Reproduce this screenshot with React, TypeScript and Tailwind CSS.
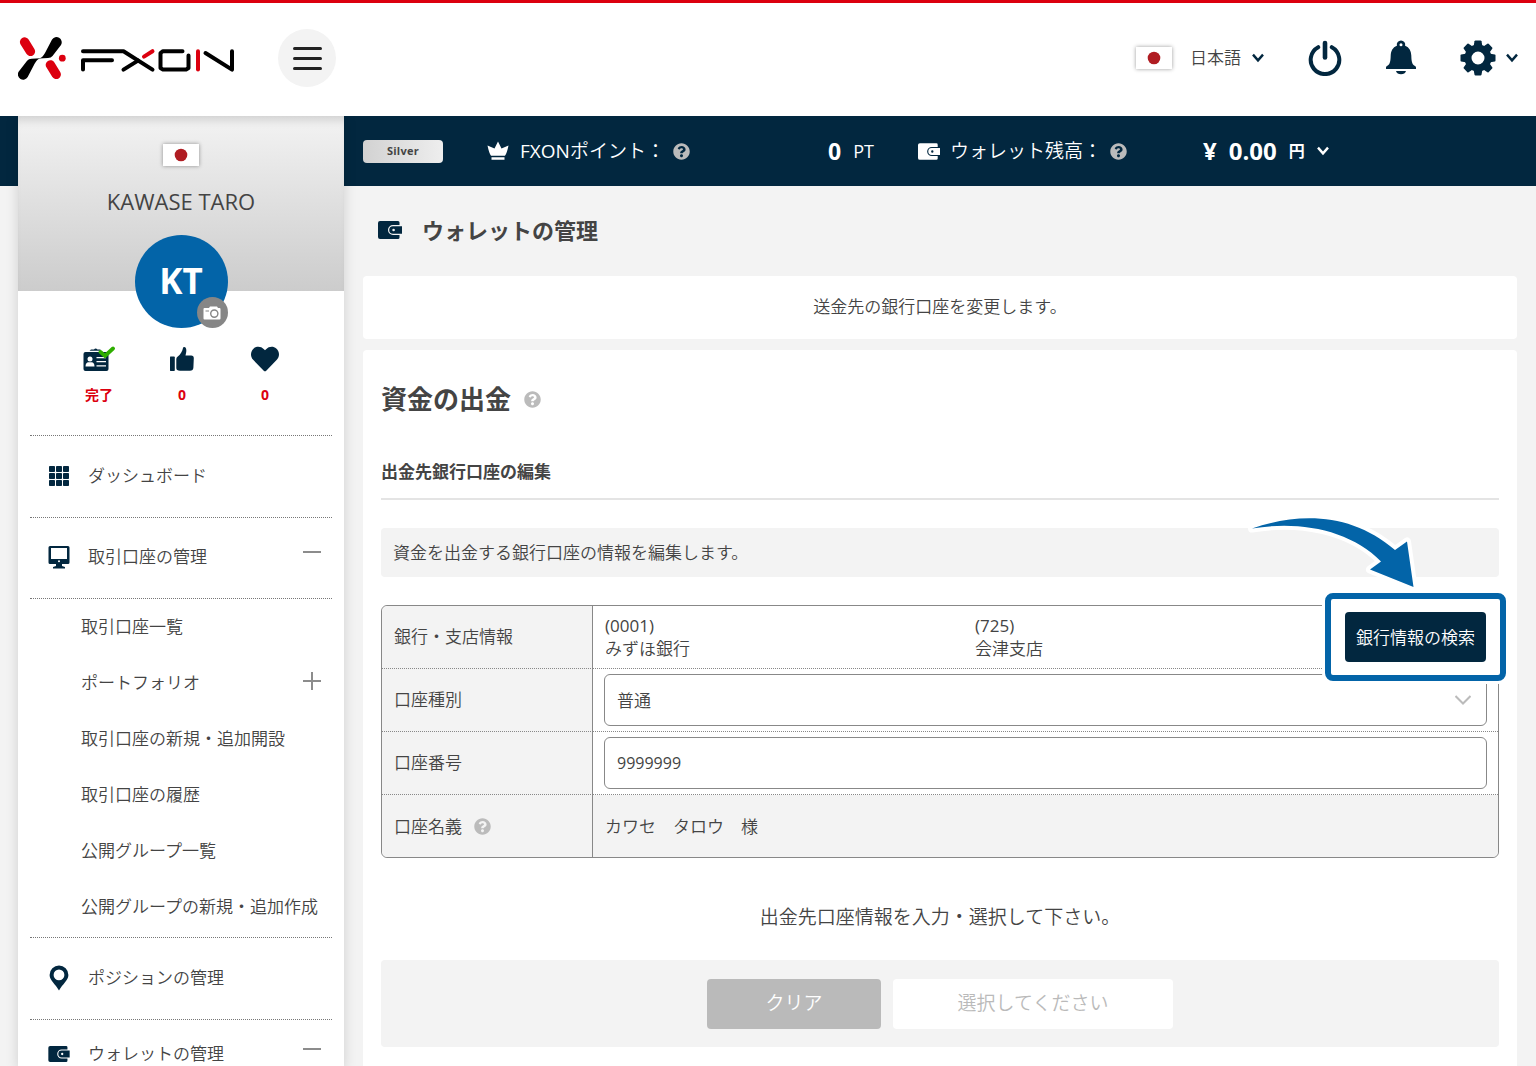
import { useState } from "react";
import type { ReactNode } from "react";
import { FaHeart, FaQuestionCircle } from "react-icons/fa";

interface IconProps {
  className?: string;
}

interface MenuRowProps {
  icon: ReactNode;
  label: string;
  open?: boolean;
  className?: string;
}

const ACCOUNT_LINKS = [
  { label: "取引口座一覧" },
  { label: "ポートフォリオ", expandable: true },
  { label: "取引口座の新規・追加開設" },
  { label: "取引口座の履歴" },
  { label: "公開グループ一覧" },
  { label: "公開グループの新規・追加作成" },
];

function Logo() {
  return (
    <svg viewBox="0 0 218 44" className="h-11 w-[218px]" role="img" aria-label="FXON">
      <g transform="translate(-18 -36)" strokeLinecap="round" strokeLinejoin="round" fill="none">
        <path d="M24.6 42 30.4 51.4M50.4 64.9 56.2 74.4" stroke="#dc000f" strokeWidth="9.4" />
        <circle cx="62.3" cy="58.2" r="3.4" fill="#dc000f" />
        <g fill="#000">
          <path d="M39 58.6C42 58 43.500 55.500 45 53L51.900 39.700A5.200 5.200 0 0 1 61 45L52.500 56Q51 58 48 58Z" />
          <path
            d="M39 58.6C42 58 43.500 55.500 45 53L51.900 39.700A5.200 5.200 0 0 1 61 45L52.500 56Q51 58 48 58Z"
            transform="rotate(180 39.800 58.400)"
          />
        </g>
        <g stroke="#000" strokeWidth="4">
          <polyline points="83,51.200 123.500,51.200 152.500,69.600" />
          <polyline points="83,69.600 83,60.300 112,60.300" />
          <line x1="123.500" y1="69.600" x2="138" y2="60.600" />
          <polyline points="182.500,51.200 163,51.200 160.500,53 160.500,68 163,69.600 186,69.600 188.500,68 188.500,55.500" />
          <polyline points="205.500,53 232,69.600 232,51.200" />
        </g>
        <g stroke="#dc000f" strokeWidth="4">
          <line x1="144" y1="56.600" x2="152.500" y2="51.200" />
          <line x1="198" y1="51.200" x2="198" y2="69.600" />
        </g>
      </g>
    </svg>
  );
}

function Flag() {
  return (
    <svg viewBox="0 0 36 22" className="h-[22px] w-9 shrink-0 bg-white shadow-[0_0_4px_rgba(0,0,0,0.4)]" aria-hidden="true">
      <circle cx="18" cy="11" r="6.300" fill="#b01c22" />
    </svg>
  );
}

function Chevron({ className }: IconProps) {
  return (
    <svg viewBox="0 0 12 10" className={className} fill="none" stroke="currentColor" strokeWidth="2.400" aria-hidden="true">
      <path d="M1 1.600 6 7.400 11 1.600" />
    </svg>
  );
}

function PowerIcon() {
  return (
    <svg viewBox="0 0 34 36" className="h-9 w-[34px]" fill="none" stroke="currentColor" strokeLinecap="round" aria-hidden="true">
      <path d="M10.200 7.200A14.300 14.300 0 1 0 23.800 7.200" strokeWidth="4" />
      <path d="M17 3V17.500" strokeWidth="4.600" />
    </svg>
  );
}

function BellIcon() {
  return (
    <svg viewBox="0 0 30 36" className="h-9 w-[30px]" fill="currentColor" aria-hidden="true">
      <path
        fillRule="evenodd"
        d="M15 .500a4.200 4.200 0 0 1 4.100 5.200c4.300 1.700 6 5.200 6.200 9.800.200 7 1 9 3.800 10.600.7.400.9.900.9 1.500v1.400H0v-1.400c0-.6.200-1.100.9-1.500 2.800-1.600 3.600-3.600 3.800-10.600.2-4.600 1.900-8.100 6.200-9.800A4.200 4.200 0 0 1 15 .500Zm0 2.700a1.500 1.500 0 1 0 0 3 1.500 1.500 0 0 0 0-3Z"
      />
      <path d="M10 31h10a5.200 4.500 0 0 1-10 0Z" />
    </svg>
  );
}

function GearIcon() {
  return (
    <svg viewBox="0 0 36 36" className="size-9" fill="currentColor" aria-hidden="true">
      <circle cx="18" cy="18" r="10" fill="none" stroke="currentColor" strokeWidth="7" />
      {[0, 45, 90, 135, 180, 225, 270, 315].map((angle) => (
        <path key={angle} d="M13.500 7 14.500 1.200Q14.700.500 15.500.500h5q.800 0 1 .700L22.500 7Z" transform={`rotate(${angle} 18 18)`} />
      ))}
    </svg>
  );
}

function WalletIcon({ className }: IconProps) {
  return (
    <svg viewBox="0 0 24 18" className={className} aria-hidden="true">
      <path
        fill="currentColor"
        fillRule="evenodd"
        d="M2 0h18q1.500 0 1.500 1.500V4H15a5 5 0 0 0 0 10h6.500v2.500q0 1.500-1.500 1.500H2q-2 0-2-2V2Q0 0 2 0Zm13 5.200h9v7.600h-9a3.800 3.800 0 0 1 0-7.600Zm.6 2.500a1.300 1.300 0 1 0 0 2.600 1.300 1.300 0 0 0 0-2.600Z"
      />
    </svg>
  );
}

function CrownIcon() {
  return (
    <svg viewBox="0 0 22 20" className="h-5 w-[22px]" fill="currentColor" aria-hidden="true">
      <path d="M11 .500 14.500 7.500 21.500 4.500Q20 12 18 14.800H4Q2 12 .500 4.500L7.500 7.500ZM4.500 16.200h13v2.600h-13Z" />
    </svg>
  );
}

function CameraIcon() {
  return (
    <svg viewBox="0 0 18 14" className="h-[14px] w-[18px]" aria-hidden="true">
      <path fill="#fff" d="M1.500 2H6L7 .600h7L15 2h1.500q1 0 1 1v9.500q0 1-1 1h-15q-1 0-1-1V3q0-1 1-1Z" />
      <circle cx="11.300" cy="7.600" r="3.600" fill="none" stroke="#868686" strokeWidth="1.400" />
      <path d="M2.500 5h3.500" stroke="#868686" />
    </svg>
  );
}

function IdCardIcon() {
  return (
    <svg viewBox="0 0 32 26" className="h-[26px] w-8" aria-hidden="true">
      <path fill="#02273f" d="M2.500 6h21q2 0 2 2v15q0 2-2 2h-21q-2 0-2-2V8q0-2 2-2Z" />
      <path fill="#02273f" d="M6.500 4.800 8 3.500h3q1.500-2 3.500 0h3V4.800Z" />
      <g fill="#fff">
        <circle cx="7" cy="13" r="2.500" />
        <path d="M2.500 20.500q0-4 3-4.200h3q3 .200 3 4.200Z" />
        <path d="M13.500 11H23v1.300h-9.500ZM13.500 15H23v1.300h-9.500ZM13.500 19.200H23v1.300h-9.500Z" />
      </g>
      <path d="M17.500 6 22 10 30 2.500" fill="none" stroke="#2fae00" strokeWidth="3.800" strokeLinecap="round" />
    </svg>
  );
}

function ThumbIcon() {
  return (
    <svg viewBox="0 0 24 24" className="size-6" fill="#02273f" aria-hidden="true">
      <path d="M.500 9.500H4q.800 0 .800.800v12.900q0 .800-.8.800H.500q-.500 0-.5-.8V10.300Q0 9.500.5 9.500Z" />
      <path d="M6.300 12q0-1.300 1.200-2.200C10.500 7.500 12.300 4.500 13 1q.200-1 1.200-.9C16.800.5 16.800 4 15.500 8.600h5.700q2.600 0 2.600 2.600l-.4 9.300q-.2 3.300-3.400 3.300H10q-3.700 0-3.700-2.800Z" />
    </svg>
  );
}

function GridIcon() {
  return (
    <svg viewBox="0 0 20 20" className="size-5" fill="currentColor" aria-hidden="true">
      {[0, 7, 14].map((y) => [0, 7, 14].map((x) => <rect key={`${x}-${y}`} x={x} y={y} width="6" height="6" rx=".8" />))}
    </svg>
  );
}

function MonitorIcon() {
  return (
    <svg viewBox="0 0 22 24" className="h-6 w-[22px]" fill="currentColor" aria-hidden="true">
      <path
        fillRule="evenodd"
        d="M2 1h18q1.500 0 1.500 1.500v15q0 1.500-1.500 1.500h-6v2l3 1v1.500H5V22l3-1v-2H2q-1.500 0-1.500-1.500v-15Q.500 1 2 1Zm1 2v11h16V3ZM11 15.200a1 1 0 1 0 0 2 1 1 0 0 0 0-2Z"
      />
    </svg>
  );
}

function PinIcon() {
  return (
    <svg viewBox="0 0 20 26" className="h-[26px] w-5" fill="currentColor" aria-hidden="true">
      <path fillRule="evenodd" d="M10 .500a9.400 9.400 0 0 1 9.400 9.400c0 5.200-5.800 9-9.400 15.600C6.400 18.900.600 15.100.600 9.900A9.400 9.400 0 0 1 10 .500Zm0 4a5.400 5.400 0 1 0 0 10.800A5.400 5.400 0 0 0 10 4.500Z" />
    </svg>
  );
}

function Help({ className }: IconProps) {
  return (
    <button type="button" aria-label="ヘルプ" className={className}>
      <FaQuestionCircle className="size-[17px]" />
    </button>
  );
}

function ToggleMark({ open }: { open: boolean }) {
  return (
    <svg viewBox="0 0 18 18" className="size-[18px] text-[#8c8c8c]" stroke="currentColor" strokeWidth="2" aria-hidden="true">
      <path d={open ? "M0 9H18" : "M0 9H18M9 0V18"} />
    </svg>
  );
}

function MenuRow({ icon, label, open, className }: MenuRowProps) {
  return (
    <a href="#" className={`flex border-t border-dotted border-[#777] pr-[11px] pb-0.5 pl-[18px] ${className}`}>
      <span className="flex w-[22px] shrink-0 items-center justify-center text-[#02273f]">{icon}</span>
      <span className="ml-[18px] flex-1 self-center">{label}</span>
      {open && (
        <span className="self-center pb-[10px]">
          <ToggleMark open />
        </span>
      )}
    </a>
  );
}

function Sidebar() {
  return (
    <aside className="flex w-[326px] shrink-0 flex-col bg-white shadow-[0_0_12px_rgba(0,0,0,0.15)]">
      <div className="flex h-[175px] flex-col items-center bg-linear-to-b from-[#f3f3f3] to-[#cccccc] pt-7 shadow-[inset_0_10px_10px_-6px_rgba(0,0,0,0.15)]">
        <Flag />
        <p className="mt-5 text-[22px] leading-[30px] font-normal">KAWASE TARO</p>
        <div className="relative mt-[19px] flex size-[93px] shrink-0 items-center justify-center rounded-full bg-[#0364a8] text-[35px] font-bold text-white">
          KT
          <button
            type="button"
            aria-label="写真を変更"
            className="absolute right-0 bottom-0 flex size-[31px] items-center justify-center rounded-full bg-[#868686]"
          >
            <CameraIcon />
          </button>
        </div>
      </div>

      <ul className="mt-[54px] flex h-[90px] justify-center pl-0.5 text-sm font-bold text-[#dc000f]">
        <li className="flex w-[83px] flex-col items-center gap-3">
          <span className="flex h-7 items-center">
            <IdCardIcon />
          </span>
          <span className="leading-5">完了</span>
        </li>
        <li className="flex w-[83px] flex-col items-center gap-3">
          <span className="flex h-7 items-center">
            <ThumbIcon />
          </span>
          <span className="leading-5">0</span>
        </li>
        <li className="flex w-[83px] flex-col items-center gap-3">
          <span className="flex h-7 items-center">
            <FaHeart className="size-7 text-[#02273f]" />
          </span>
          <span className="leading-5">0</span>
        </li>
      </ul>

      <nav className="mx-3 text-[17px] leading-[26px]">
        <MenuRow icon={<GridIcon />} label="ダッシュボード" className="h-[82px]" />
        <MenuRow icon={<MonitorIcon />} label="取引口座の管理" open className="h-[81px]" />
        <ul className="border-t border-dotted border-[#777] pb-0.5">
          {ACCOUNT_LINKS.map((link) => (
            <li key={link.label}>
              <a href="#" className="flex h-14 items-center justify-between pr-[11px] pl-[51px] whitespace-nowrap">
                {link.label}
                {link.expandable && (
                  <span className="pb-1">
                    <ToggleMark open={false} />
                  </span>
                )}
              </a>
            </li>
          ))}
        </ul>
        <MenuRow icon={<PinIcon />} label="ポジションの管理" className="h-[82px]" />
        <MenuRow icon={<WalletIcon className="h-4 w-[22px]" />} label="ウォレットの管理" open className="pt-5" />
      </nav>
    </aside>
  );
}

function Header() {
  return (
    <header className="relative z-10 flex h-[116px] items-center border-t-[3px] border-[#dc000f] bg-white pr-[18px] pb-[3px] pl-[18px]">
      <a href="#" className="shrink-0">
        <Logo />
      </a>
      <button
        type="button"
        aria-label="メニュー"
        className="ml-[42px] flex size-[58px] flex-col items-center justify-center gap-[7px] rounded-full bg-[#f3f3f3]"
      >
        <span className="h-[3px] w-[29px] rounded-full bg-[#222]" />
        <span className="h-[3px] w-[29px] rounded-full bg-[#222]" />
        <span className="h-[3px] w-[29px] rounded-full bg-[#222]" />
      </button>
      <div className="ml-auto flex items-center text-[#02273f]">
        <button type="button" className="flex items-center">
          <Flag />
          <span className="ml-[18px] text-[17px] text-[#444]">日本語</span>
          <Chevron className="ml-[11px] h-[10px] w-3" />
        </button>
        <button type="button" aria-label="ログアウト" className="ml-11">
          <PowerIcon />
        </button>
        <button type="button" aria-label="通知" className="ml-11">
          <BellIcon />
        </button>
        <button type="button" aria-label="設定" className="ml-11 flex items-center">
          <GearIcon />
          <Chevron className="ml-[10px] h-[10px] w-3" />
        </button>
      </div>
    </header>
  );
}

function StatusBar() {
  return (
    <div className="flex h-[70px] items-center text-[19px] whitespace-nowrap text-white">
      <span className="flex h-[23px] w-20 items-center justify-center rounded bg-linear-to-r from-[#d2d2d2] to-[#eeeeee] text-[11px] font-bold tracking-wide text-[#444]">
        Silver
      </span>
      <div className="ml-11 flex w-[387px] items-center">
        <CrownIcon />
        <span className="ml-[11px]">
          <span className="font-normal">FXON</span>ポイント：
        </span>
        <Help className="ml-2 text-[#bbb]" />
        <span className="ml-auto text-[23px] font-bold">0</span>
        <span className="ml-3 text-lg font-normal">PT</span>
      </div>
      <div className="ml-11 flex items-center">
        <WalletIcon className="h-[17px] w-[22px]" />
        <span className="ml-[10px]">ウォレット残高：</span>
        <Help className="ml-2 text-[#bbb]" />
      </div>
      <button type="button" className="ml-[76px] flex items-center font-bold">
        <span className="text-2xl">¥</span>
        <span className="ml-3 text-2xl">0.00</span>
        <span className="ml-3 text-base">円</span>
        <Chevron className="ml-3 h-[10px] w-3" />
      </button>
    </div>
  );
}

function SearchCallout() {
  return (
    <div className="relative z-10 shrink-0">
      <div className="absolute -inset-x-5 -inset-y-[19px] rounded-lg border-[6px] border-[#0364a8] bg-white shadow-[0_0_0_3px_#fff]" />
      <svg viewBox="1245 508 180 84" className="pointer-events-none absolute -top-[104px] -left-[100px] h-[84px] w-[180px]" aria-hidden="true">
        <path
          d="M1252 528.500C1300 512 1352 513 1395 550L1407 541.500 1413.500 587 1370 569.500 1381 561.500C1350 530 1300 520.500 1252 528.500Z"
          fill="#0364a8"
          stroke="#fff"
          strokeWidth="8"
          strokeLinejoin="round"
          paintOrder="stroke"
        />
      </svg>
      <button type="button" className="relative h-[50px] w-[141px] rounded bg-[#02273f] text-[17px] text-white">
        銀行情報の検索
      </button>
    </div>
  );
}

function BankTable() {
  const [kind, setKind] = useState("普通");
  const [number, setNumber] = useState("9999999");

  return (
    <table className="mt-7 w-full border-separate border-spacing-0 rounded-md border border-[#888] text-[17px] leading-[23px]">
      <tbody>
        <tr>
          <th className="h-[63px] w-[211px] rounded-tl-md border-r border-b border-r-[#888] border-b-[#888] bg-[#f3f3f3] px-3 pb-0.5 text-left font-[350] [border-bottom-style:dotted]">
            銀行・支店情報
          </th>
          <td className="border-b border-dotted border-[#888] p-0">
            <div className="flex h-[62px] items-center px-3">
              <p className="flex-1">
                <span className="font-normal">(0001)</span>
                <br />
                みずほ銀行
              </p>
              <p className="flex-1">
                <span className="font-normal">(725)</span>
                <br />
                会津支店
              </p>
              <SearchCallout />
            </div>
          </td>
        </tr>
        <tr>
          <th className="h-[63px] border-r border-b border-r-[#888] border-b-[#888] bg-[#f3f3f3] px-3 pb-0.5 text-left font-[350] [border-bottom-style:dotted]">
            <label htmlFor="account-kind">口座種別</label>
          </th>
          <td className="border-b border-dotted border-[#888] px-[11px] py-0">
            <div className="relative">
              <select
                id="account-kind"
                value={kind}
                onChange={(e) => setKind(e.target.value)}
                className="block h-[52px] w-full appearance-none rounded-md border border-[#888] bg-white px-3"
              >
                <option>普通</option>
                <option>当座</option>
              </select>
              <svg viewBox="0 0 16 10" className="pointer-events-none absolute top-[21px] right-4 h-[10px] w-4" fill="none" stroke="#bbb" strokeWidth="2" aria-hidden="true">
                <path d="M.500 1 8 8.500 15.500 1" />
              </svg>
            </div>
          </td>
        </tr>
        <tr>
          <th className="h-[63px] border-r border-b border-r-[#888] border-b-[#888] bg-[#f3f3f3] px-3 pb-0.5 text-left font-[350] [border-bottom-style:dotted]">
            <label htmlFor="account-number">口座番号</label>
          </th>
          <td className="border-b border-dotted border-[#888] px-[11px] py-0">
            <input
              id="account-number"
              type="text"
              value={number}
              onChange={(e) => setNumber(e.target.value)}
              className="block h-[52px] w-full rounded-md border border-[#888] bg-white px-3 text-base font-normal"
            />
          </td>
        </tr>
        <tr>
          <th className="h-[62px] rounded-bl-md border-r border-[#888] bg-[#f3f3f3] px-3 py-0 text-left font-[350]">
            <span className="flex items-center">
              口座名義
              <Help className="ml-3 text-[#bbb]" />
            </span>
          </th>
          <td className="rounded-br-md bg-[#f3f3f3] px-3 py-0">カワセ　タロウ　様</td>
        </tr>
      </tbody>
    </table>
  );
}

export default function App() {
  return (
    <div className="flex min-h-screen flex-col bg-[#f3f3f3] font-['Open_Sans','Noto_Sans_CJK_JP',sans-serif] font-[350] text-[#444]">
      <Header />
      <div className="flex flex-1 bg-[linear-gradient(#02273f_70px,#f3f3f3_70px)] pr-[19px] pl-[18px]">
        <Sidebar />
        <main className="flex min-w-0 flex-1 flex-col pl-[19px]">
          <StatusBar />
          <h1 className="flex h-[90px] items-center pb-0.5 pl-[15px] text-[22px] font-bold">
            <WalletIcon className="mr-5 h-[18px] w-6 text-[#02273f]" />
            ウォレットの管理
          </h1>
          <p className="flex h-[63px] shrink-0 items-center justify-center rounded bg-white pb-0.5 text-[17px]">
            送金先の銀行口座を変更します。
          </p>
          <section className="mt-[11px] flex-1 rounded-t bg-white px-[18px]">
            <h2 className="flex h-[98px] items-center text-[26px] font-bold">
              資金の出金
              <Help className="ml-[13px] text-[#bbb]" />
            </h2>
            <h3 className="flex h-[52px] items-center border-b-2 border-[#e4e4e4] pb-0.5 text-[17px] font-bold">
              出金先銀行口座の編集
            </h3>
            <p className="mt-7 flex h-[49px] items-center rounded bg-[#f3f3f3] px-3 text-[17px]">
              資金を出金する銀行口座の情報を編集します。
            </p>
            <BankTable />
            <p className="mt-11 text-center text-[19px] leading-[30px]">
              出金先口座情報を入力・選択して下さい。
            </p>
            <div className="mt-7 flex h-[87px] items-center justify-center gap-3 rounded bg-[#f3f3f3] text-[19px]">
              <button type="button" className="h-[50px] w-[174px] rounded bg-[#bababa] text-white">
                クリア
              </button>
              <button type="button" disabled className="h-[50px] w-[280px] rounded bg-white text-[#bababa]">
                選択してください
              </button>
            </div>
          </section>
        </main>
      </div>
    </div>
  );
}
